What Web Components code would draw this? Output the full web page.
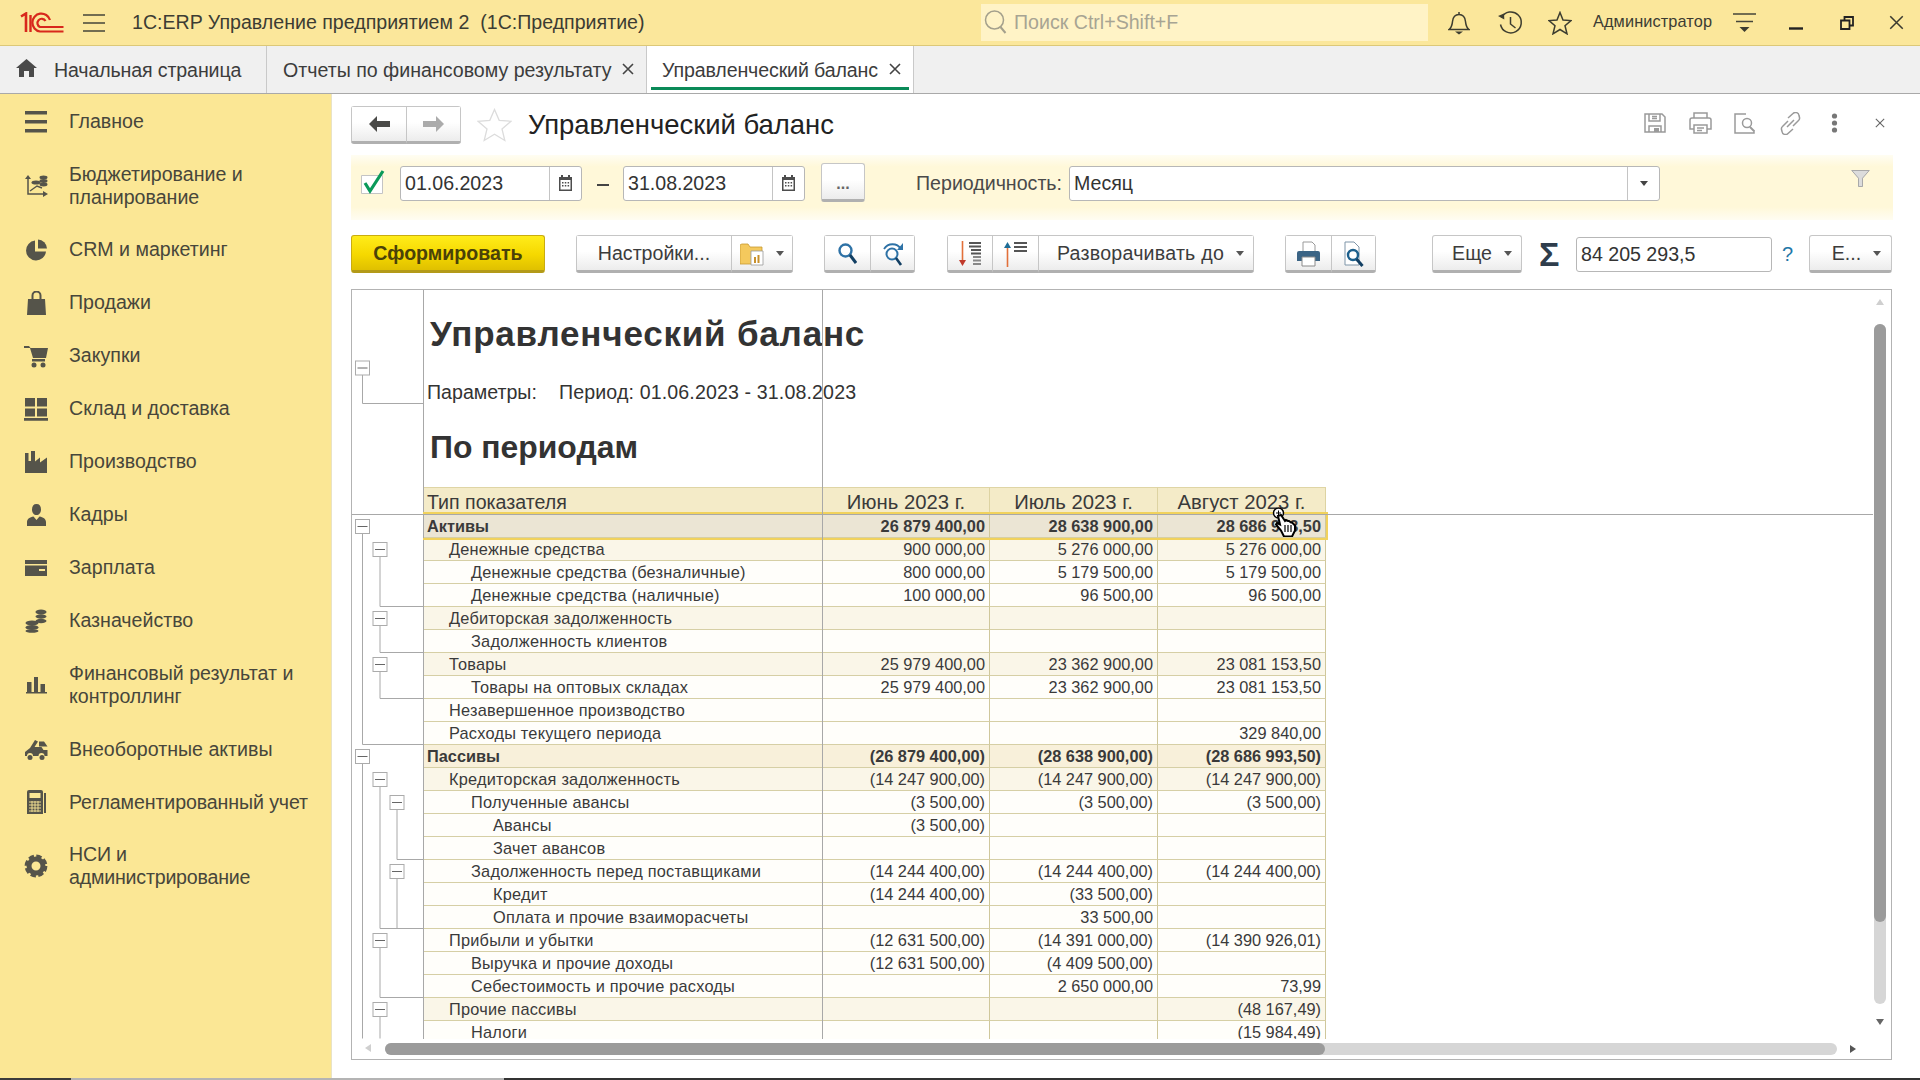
<!DOCTYPE html>
<html lang="ru"><head><meta charset="utf-8"><title>Управленческий баланс</title>
<style>
html,body{margin:0;padding:0;width:1920px;height:1080px;overflow:hidden;background:#fff;font-family:"Liberation Sans",Arial,sans-serif;color:#333}
</style></head><body>
<app-shell>
  <top-bar slot="top"></top-bar>
  <tab-bar slot="tabs">
    <ui-tab home style="width:267px;letter-spacing:-.13px">Начальная страница</ui-tab>
    <ui-tab closable style="width:380px;padding-left:16px">Отчеты по финансовому результату</ui-tab>
    <ui-tab closable active style="width:267px;letter-spacing:-.12px">Управленческий баланс</ui-tab>
  </tab-bar>
  <side-nav slot="side">
    <nav-item icon="main">Главное</nav-item>
    <nav-item icon="budget" two>Бюджетирование и<br>планирование</nav-item>
    <nav-item icon="crm">CRM и маркетинг</nav-item>
    <nav-item icon="sales">Продажи</nav-item>
    <nav-item icon="cart">Закупки</nav-item>
    <nav-item icon="stock">Склад и доставка</nav-item>
    <nav-item icon="factory">Производство</nav-item>
    <nav-item icon="person">Кадры</nav-item>
    <nav-item icon="card">Зарплата</nav-item>
    <nav-item icon="coins">Казначейство</nav-item>
    <nav-item icon="bars" two>Финансовый результат и<br>контроллинг</nav-item>
    <nav-item icon="truck">Внеоборотные активы</nav-item>
    <nav-item icon="calc" style="letter-spacing:-.11px">Регламентированный учет</nav-item>
    <nav-item icon="gear" two style="letter-spacing:-.2px">НСИ и<br>администрирование</nav-item>
  </side-nav>
  <form-page slot="main"></form-page>
</app-shell>
<script>
const svg=(w,h,vb,body,extra='')=>`<svg width="${w}" height="${h}" viewBox="${vb}" ${extra} style="display:block;flex:none">${body}</svg>`;
const NAV={
 main:'<path d="M1 1h22v3.500H1zM1 10h22v3.500H1zM1 19h22v3.500H1z"/>',
 budget:'<path d="M4 4v16h18" fill="none" stroke="#55544a" stroke-width="1.500"/><path d="M1 5l3-4 3 4zM19 17l5 3-5 3z"/><path d="M6 17l7-5 5 2" fill="none" stroke="#55544a" stroke-width="1.400"/><ellipse cx="12" cy="8.500" rx="4.500" ry="2"/><ellipse cx="19.500" cy="3.500" rx="4" ry="1.900"/><ellipse cx="19.500" cy="7" rx="4" ry="1.900"/><ellipse cx="19.500" cy="10.500" rx="4" ry="1.900"/>',
 crm:'<path d="M11 2.500a10 10 0 1 0 11 11H11z"/><path d="M14 1.500v9h9a9.500 9.500 0 0 0-9-9z"/>',
 sales:'<path d="M4 8h17l1 16H3z"/><path d="M8.500 9V4.500a4 4 0 0 1 8 0V9" fill="none" stroke="#55544a" stroke-width="2"/>',
 cart:'<path d="M0 2h5l1.500 2H24l-2 10H9L6 4H0z"/><path d="M8 15h13v2.500H8z"/><circle cx="10" cy="21" r="2.500"/><circle cx="19" cy="21" r="2.500"/>',
 stock:'<path d="M1 1h10v8.500H1zM13 1h10v8.500H13zM1 11.500h10v8H1zM13 11.500h10v8H13zM0 21h24v2.800H0z"/>',
 factory:'<path d="M1 23V3h3.500v8H7V1h4v10.500l5-4v5l7-5v15.500z"/>',
 person:'<path d="M12.500 1c3 0 4.500 2 4.500 5.500S15 12 12.500 12 8 10 8 6.500 9.500 1 12.500 1zM3 23v-4c0-3 3-5 6.500-5.500l3 3.500 3-3.500C19 14 22 16 22 19v4z"/>',
 card:'<path d="M1 4h22v4H1zM1 9.500h22V20H1z"/><path d="M15 13h6v2h-6z" fill="#fbe795"/>',
 coins:'<ellipse cx="8" cy="14" rx="6.500" ry="2.400"/><ellipse cx="8" cy="18.500" rx="6.500" ry="2.400"/><ellipse cx="8" cy="22" rx="6.500" ry="1.800"/><ellipse cx="17" cy="3" rx="5.500" ry="2.400"/><ellipse cx="17" cy="7.500" rx="5.500" ry="2.200"/><ellipse cx="17" cy="12" rx="5.500" ry="2.200"/>',
 bars:'<path d="M3 9h4.500v10H3zM10 4h4v15h-4zM16.500 11h4.500v8h-4.500zM2 19h21v1.500H2z"/>',
 truck:'<path d="M1 19v-4l5-4 5-8 3 1.500-3.500 5.500h7l2 3h4v6h-3a3 3 0 0 0-6 0H9a3 3 0 0 0-6 0z"/><circle cx="6" cy="20.500" r="2.500"/><circle cx="18" cy="20.500" r="2.500"/><path d="M15 4.500h5l3.500 5h-8.500z"/>',
 calc:'<path d="M5 0h12a2 2 0 0 1 2 2v22H3V2a2 2 0 0 1 2-2z"/><path d="M20 3h2v20h-2z"/><path d="M5.500 3h11v5h-11z" fill="#fbe795"/><path d="M5 12h12M5 15h12M5 18h12M5 21h12M8 11v11M11 11v11M14 11v11" stroke="#fbe795" stroke-width=".9" fill="none"/>',
 gear:'<circle cx="12" cy="12" r="7" fill="none" stroke="#55544a" stroke-width="5"/><circle cx="12" cy="12" r="9.800" fill="none" stroke="#55544a" stroke-width="3.200" stroke-dasharray="5.300 2.400"/>'
};
const X=(s,c='#444',w=1.5)=>svg(s,s,'0 0 12 12',`<path d="M1 1l10 10M11 1L1 11" stroke="${c}" stroke-width="${w}" fill="none"/>`);

customElements.define('app-shell',class extends HTMLElement{constructor(){super();this.attachShadow({mode:'open'}).innerHTML=`<style>
:host{display:grid;width:1920px;height:1080px;grid-template-columns:332px 1fr;grid-template-rows:46px 48px 984px 2px;overflow:hidden}
.t,.b{grid-column:1/3}.f{grid-column:1/3;display:flex}
.f i{display:block;height:2px}
</style><div class="t"><slot name="top"></slot></div><div class="b"><slot name="tabs"></slot></div><div><slot name="side"></slot></div><div><slot name="main"></slot></div>
<div class="f"><i style="width:71px;background:#3b3b3b"></i><i style="width:433px;background:#b4b4b4"></i><i style="flex:1;background:#333"></i></div>`}});

customElements.define('top-bar',class extends HTMLElement{constructor(){super();const ic='fill="none" stroke="#3d3d30" stroke-width="1.5"';this.attachShadow({mode:'open'}).innerHTML=`<style>
:host{display:flex;align-items:center;height:45px;background:#fbe79b;border-bottom:1px solid #dcc878;font-size:19.6px;color:#3c3c33;padding-left:20px;box-sizing:content-box}
.title{margin-left:27px;white-space:pre;width:849px;flex:none}
.search{width:447px;height:37px;background:#fff3c6;display:flex;align-items:center;flex:none;padding-left:3px;box-sizing:border-box;color:#a7a493;margin-top:-1px}
.search span{margin-left:7px}
.user{font-size:16.33px;letter-spacing:.1px;width:120px;flex:none;margin-left:21px;margin-top:-3px;white-space:nowrap}
</style>
${svg(44,21,'0 0 44 21','<path d="M1 4.500L6 1.500V20" stroke="#d8281c" stroke-width="2.600" fill="none"/><path d="M30 8A9 9 0 1 0 20 19.500H43.500M25.500 9A4.300 4.300 0 1 0 20 15H43.500" stroke="#d8281c" stroke-width="2.200" fill="none"/><path d="M10.500 3V20" stroke="#d8281c" stroke-width="2.400"/>')}
<span style="margin-left:19px">${svg(22,18,'0 0 22 18','<path d="M0 1h22M0 9h22M0 17h22" stroke="#45453a" stroke-width="1.400"/>')}</span>
<div class="title">1С:ERP Управление предприятием 2  (1С:Предприятие)</div>
<div class="search">${svg(23,26,'0 0 23 26','<circle cx="10.500" cy="11" r="9" fill="none" stroke="#a4a08c" stroke-width="1.500"/><path d="M16.500 18l5 6" stroke="#a4a08c" stroke-width="2"/>')}<span>Поиск Ctrl+Shift+F</span></div>
<span style="margin-left:20px">${svg(22,24,'0 0 22 24',`<path d="M1 18.500h20c-3-2-3-4-3.500-8C17 6 15 3.500 11 3.500S5 6 4.500 10.500c-.5 4-.5 6-3.500 8zM11 1v2.500" ${ic}/><path d="M7 20.500h8L11 23.500z" fill="#3d3d30"/>`)}</span>
<span style="margin-left:27px">${svg(26,26,'0 0 26 26',`<path d="M4.500 7.500a10.500 10.500 0 1 1-1 7M13.500 7v7l5 4" ${ic}/><path d="M1 6l6-2.500.3 6z" fill="#3d3d30"/>`)}</span>
<span style="margin-left:25px">${svg(24,24,'0 0 24 24',`<path d="M12 1.500l3 7.500 8 .6-6 5.200 2 8-7-4.300-7 4.300 2-8-6-5.200 8-.6z" ${ic}/>`)}</span>
<div class="user">Администратор</div>
<span style="margin-left:20px">${svg(23,20,'0 0 23 20','<path d="M0 1h23M3 8.500h17" stroke="#45453a" stroke-width="1.400"/><path d="M6.500 14h10l-5 5z" fill="#3d3d30"/>')}</span>
<span style="margin-left:33px;margin-top:12px">${svg(14,3,'0 0 14 3','<path d="M0 1.500h14" stroke="#222" stroke-width="2.400"/>')}</span>
<span style="margin-left:37px">${svg(14,14,'0 0 14 14','<path d="M1 4.500h8.500V13H1zM4.500 4.500V1H13v8.500H9.500" fill="none" stroke="#222" stroke-width="1.800"/>')}</span>
<span style="margin-left:35px">${X(15,'#3a3a30',1.2)}</span>`}});

customElements.define('tab-bar',class extends HTMLElement{constructor(){super();this.attachShadow({mode:'open'}).innerHTML=`<style>:host{display:flex;height:47px;background:#f0f0f0;border-bottom:1px solid #a9a9a9}</style><slot></slot>`}});

customElements.define('ui-tab',class extends HTMLElement{constructor(){super();
 const home=this.hasAttribute('home'),cl=this.hasAttribute('closable'),act=this.hasAttribute('active');
 this.attachShadow({mode:'open'}).innerHTML=`<style>
:host{display:flex;align-items:center;height:47px;font-size:19.6px;color:#3c3c3c;border-right:1px solid #c9c9c9;position:relative;padding-left:${home?16:15}px;white-space:nowrap;background:${act?'#fff':'transparent'};box-sizing:border-box;flex:none}
.c{margin-left:${act?11:11}px;margin-top:-1px}.h{margin-right:17px;margin-top:-4px}
.u{position:absolute;left:4px;right:4px;top:41px;height:3px;background:#0a8a58}
span{margin-top:1px}
</style>${home?`<div class="h">${svg(21,18,'0 0 21 18','<path d="M10.500 0L21 9h-3v9h-5v-6H8v6H3V9H0z" fill="#4a4a4a"/>')}</div>`:''}<span><slot></slot></span>${cl?`<div class="c">${X(12,'#444',1.6)}</div>`:''}${act?'<div class="u"></div>':''}`}});

customElements.define('side-nav',class extends HTMLElement{constructor(){super();this.attachShadow({mode:'open'}).innerHTML=`<style>:host{display:block;width:331px;height:983px;padding-top:1px;background:#fbe795;border-right:1px solid #e9e3c6;font-size:19.6px;color:#47463b;box-sizing:content-box}</style><slot></slot>`}});
customElements.define('nav-item',class extends HTMLElement{constructor(){super();this.attachShadow({mode:'open'}).innerHTML=`<style>
:host{display:flex;align-items:center;padding:15px 0 15px 24px;line-height:23px}
:host([two]){padding:14.7px 0 14.700px 24px}
.i{width:24px;height:22px;flex:none;margin-right:21px;display:flex;align-items:center}
</style><div class="i">${svg(24,24,'0 0 24 24',`<g fill="#55544a">${NAV[this.getAttribute('icon')]||''}</g>`)}</div><div><slot></slot></div>`}});

customElements.define('ui-btn',class extends HTMLElement{constructor(){super();const a=this.hasAttribute('arrow');this.attachShadow({mode:'open'}).innerHTML=`<style>
:host{display:flex;align-items:center;justify-content:center;box-sizing:border-box;height:38px;background:linear-gradient(#fff 45%,#ececec);border:1px solid #c6c6c6;border-bottom:3px solid #b0b0b0;border-radius:3px;font-size:19.6px;color:#3c3c3c;white-space:nowrap;flex:none;letter-spacing:var(--ls,0)}
:host([primary]){background:linear-gradient(#ffec1a,#f5d800 55%,#dfc000);border-color:#c9ac10;border-bottom-color:#b39a18;font-weight:bold;color:#4a4208}
.s{padding-top:1px}
.a{width:0;height:0;border:4px solid transparent;border-top:5px solid #555;border-bottom:0;margin-left:12px;flex:none}
</style><div class="s"><slot></slot></div>${a?'<div class="a"></div>':''}`}});
customElements.define('btn-group',class extends HTMLElement{constructor(){super();this.attachShadow({mode:'open'}).innerHTML=`<style>:host{display:flex;flex:none;border-radius:3px;overflow:hidden}::slotted(ui-btn){border-radius:0;border-left-width:0}::slotted(ui-btn:first-child){border-left-width:1px}</style><slot></slot>`}});
customElements.define('ui-field',class extends HTMLElement{constructor(){super();const b=this.getAttribute('btn');const ic=b==='cal'?svg(13,16,'0 0 13 16','<path d="M0 2h13v14H0z" fill="#4d4d4d"/><path d="M1.500 5h10v9.500h-10z" fill="#fff"/><path d="M3 0v3M10 0v3" stroke="#4d4d4d" stroke-width="2"/><path d="M3 7h1.500v1.500H3zM5.800 7h1.500v1.500H5.800zM8.600 7h1.500v1.500H8.600zM3 10h1.500v1.500H3zM5.800 10h1.500v1.500H5.800zM8.600 10h1.500v1.500H8.600z" fill="#4d4d4d"/>'):b==='down'?'<div style="width:0;height:0;border:4px solid transparent;border-top:5px solid #444;border-bottom:0"></div>':'';
 this.attachShadow({mode:'open'}).innerHTML=`<style>
:host{display:flex;align-items:center;box-sizing:border-box;height:35px;background:#fff;border:1px solid #b7b7b7;border-radius:3px;font-size:19.6px;color:#333;flex:none}
.v{flex:1;padding:1px 0 0 4px;white-space:nowrap}.b{width:31px;height:100%;border-left:1px solid #c4c4c4;display:flex;align-items:center;justify-content:center;flex:none}
</style><div class="v"><slot></slot></div>${b?`<div class="b">${ic}</div>`:''}`}});

customElements.define('form-page',class extends HTMLElement{constructor(){super();
 const g='#9a9a9a';
 this.attachShadow({mode:'open'}).innerHTML=`<style>
:host{display:block;padding:0 27px 0 19px;height:984px;background:#fff;box-sizing:border-box}
.head{display:flex;align-items:center;height:61px}
.head>span.u,.head>svg{margin-top:-3px}
h1{font:normal 27.45px "Liberation Sans",Arial,sans-serif;color:#222;margin:0 0 0 16px;padding-top:1px;flex:1;white-space:nowrap}
.filter{display:flex;align-items:center;height:65px;box-sizing:border-box;padding-bottom:9px;background:linear-gradient(#fffdf2,#fff8d9 18%,#fff8d9 80%,#fffdf2)}
.lab{font-size:19.6px;color:#4a4a4a;white-space:nowrap;padding-top:1px}
.tools{display:flex;align-items:center;height:38px;margin-top:15px}
.sigma{font:bold 34px "Liberation Sans",Arial,sans-serif;color:#2f3d4c;flex:none;width:19px;margin-left:17px;line-height:38px}
.q{font-size:20px;color:#1f77a8;margin-left:10px;width:11px;flex:none}
report-view{margin-top:16px}
</style>
<div class="head">
 <btn-group>
  <ui-btn style="width:56px">${svg(21,16,'0 0 21 16','<path d="M8 0v5h13v6H8v5L0 8z" fill="#4a4a48"/>')}</ui-btn>
  <ui-btn style="width:54px">${svg(21,16,'0 0 21 16','<path d="M13 0v5H0v6h13v5l8-8z" fill="#ababab"/>')}</ui-btn>
 </btn-group>
 <span style="margin-left:16px">${svg(35,34,'0 0 35 34','<path d="M17.500 1.500l4.700 10.800 11.800 1-9 7.700 2.800 11.500-10.300-6.200-10.300 6.200 2.800-11.500-9-7.700 11.800-1z" fill="#fff" stroke="#dcdcdc" stroke-width="1.300"/>')}</span>
 <h1>Управленческий баланс</h1>
 ${svg(22,20,'0 0 22 20',`<path d="M1 1h17l3 3v15H1zM5 1v7h11V1M8 3.500h5M8 5.500h5M5 19v-6h12v6" fill="none" stroke="${g}" stroke-width="1.500"/><path d="M10 15h5v4h-5z" fill="${g}"/>`)}
 <span class="u" style="margin-left:23px">${svg(23,22,'0 0 23 22',`<path d="M5 6V1h13v5M5 17H1V8a2 2 0 0 1 2-2h17a2 2 0 0 1 2 2v9h-4M5 13h13v8H5zM8 16h7M8 18.500h5" fill="none" stroke="${g}" stroke-width="1.500"/>`)}</span>
 <span class="u" style="margin-left:22px">${svg(21,21,'0 0 21 21',`<path d="M12 1H1v19h19v-3" fill="none" stroke="${g}" stroke-width="1.500"/><circle cx="13" cy="10" r="4.500" fill="none" stroke="${g}" stroke-width="1.500"/><path d="M16 14l4 4" stroke="${g}" stroke-width="2"/>`)}</span>
 <span class="u" style="margin-left:24px">${svg(23,23,'0 0 23 23',`<path d="M9 6l5-4.500a3.500 3.500 0 0 1 6 2l.5 2a3 3 0 0 1-1 3L14 14M14 17l-5 4.500a3.500 3.500 0 0 1-6-2l-.5-2a3 3 0 0 1 1-3L9 9M8 15l7-7" fill="none" stroke="${g}" stroke-width="1.500"/>`)}</span>
 <span class="u" style="margin-left:29px">${svg(7,20,'0 0 7 20','<circle cx="3.500" cy="3" r="2.600" fill="#777"/><circle cx="3.500" cy="10" r="2.600" fill="#777"/><circle cx="3.500" cy="17" r="2.600" fill="#777"/>')}</span>
 <span class="u" style="margin-left:37px;margin-right:8px">${X(10,'#666',1.3)}</span>
</div>
<div class="filter">
 <span style="margin-left:10px;margin-top:-2px;width:24px;flex:none">${svg(24,24,'0 0 24 24','<path d="M.5 5.500h21v18H.5z" fill="#fff" stroke="#c4c4c4"/><path d="M4 13l5 8L22 1" fill="none" stroke="#0a9a5a" stroke-width="3.200"/>')}</span>
 <ui-field btn="cal" style="width:182px;margin-left:15px">01.06.2023</ui-field>
 <span style="width:12px;height:2px;background:#444;margin:3px 14px 0 15px;flex:none"></span>
 <ui-field btn="cal" style="width:182px">31.08.2023</ui-field>
 <ui-btn style="width:44px;margin-left:16px;height:39px;margin-top:-2px;font-size:16px;padding-top:4px;font-weight:bold;color:#666">...</ui-btn>
 <span class="lab" style="margin-left:51px;margin-right:7px;flex:none">Периодичность:</span>
 <ui-field btn="down" style="width:591px">Месяц</ui-field>
 <span style="margin-left:191px;margin-top:-9px">${svg(19,17,'0 0 19 17','<path d="M0 0h19l-7 8v9H7V8z" fill="#dcdcdc"/><path d="M.8.500h17.400l-6.700 7.700V16.500h-4V8.200z" fill="none" stroke="#a9a9a9"/>')}</span>
</div>
<div class="tools">
 <ui-btn primary style="width:194px">Сформировать</ui-btn>
 <btn-group style="margin-left:31px">
  <ui-btn style="width:156px">Настройки...</ui-btn>
  <ui-btn arrow style="width:61px">${svg(24,24,'0 0 24 24','<path d="M0 4a2 2 0 0 1 2-2h6l2 3h12v17H0z" fill="#f4c95d" stroke="#c89a30" stroke-width=".8"/><path d="M11 9h12v14H11z" fill="#fff" stroke="#9a9a9a" stroke-width=".8"/><path d="M14 15h2v6h-2zM17.500 13h2v8h-2z" fill="#c8902c"/>')}</ui-btn>
 </btn-group>
 <btn-group style="margin-left:31px">
  <ui-btn style="width:47px">${svg(19,21,'0 0 19 21','<circle cx="7.500" cy="7.500" r="6" fill="none" stroke="#2e72a6" stroke-width="2.400"/><path d="M12 12l6 8" stroke="#123f63" stroke-width="3"/>')}</ui-btn>
  <ui-btn style="width:44px">${svg(22,24,'0 0 22 24','<circle cx="10" cy="12" r="5.500" fill="none" stroke="#2e72a6" stroke-width="2"/><path d="M14 16l5 7" stroke="#123f63" stroke-width="2.600"/><path d="M2 7a10 10 0 0 1 17 0" fill="none" stroke="#2e72a6" stroke-width="1.800"/><path d="M21 1v7h-6z" fill="#2e72a6"/>')}</ui-btn>
 </btn-group>
 <btn-group style="margin-left:32px">
  <ui-btn style="width:46px">${svg(23,26,'0 0 23 26','<path d="M3.500 0v21" stroke="#e2703a" stroke-width="1.600"/><path d="M0 19h7l-3.500 6z" fill="#c0392b"/><path d="M10 2h12M10 5.500h12M12 9h10M12 12.500h10" stroke="#555" stroke-width="1.800"/><path d="M14 16h8M14 19.500h8M14 23h8" stroke="#888" stroke-width="1.800"/>')}</ui-btn>
  <ui-btn style="width:46px">${svg(23,26,'0 0 23 26','<path d="M3.500 5v21" stroke="#e2703a" stroke-width="1.600"/><path d="M0 7h7L3.500 1z" fill="#1f6d96"/><path d="M10 2h13M10 6h13M10 10h13" stroke="#555" stroke-width="1.800"/>')}</ui-btn>
  <ui-btn arrow style="width:215px;--ls:.24px;padding-left:9px">Разворачивать до</ui-btn>
 </btn-group>
 <btn-group style="margin-left:31px">
  <ui-btn style="width:47px">${svg(23,26,'0 0 23 26','<path d="M6 1h9l3 3v8H6z" fill="#fff" stroke="#9a9a9a"/><path d="M2 10h19a2 2 0 0 1 2 2v8H0v-8a2 2 0 0 1 2-2z" fill="#3b6485"/><path d="M5 16h13v9H5z" fill="#fff" stroke="#8a8a8a"/>')}</ui-btn>
  <ui-btn style="width:44px">${svg(21,26,'0 0 21 26','<path d="M2 1h9l5 5v18H2z" fill="#fff" stroke="#7f95a8"/><circle cx="10" cy="14" r="5" fill="#fff" stroke="#1c5f8c" stroke-width="2.400"/><path d="M13.500 18l6 7" stroke="#123f63" stroke-width="3"/>')}</ui-btn>
 </btn-group>
 <ui-btn arrow style="width:90px;margin-left:56px;padding-left:10px">Еще</ui-btn>
 <span class="sigma">Σ</span>
 <ui-field style="width:196px;margin-left:18px">84 205 293,5</ui-field>
 <span class="q">?</span>
 <ui-btn arrow style="width:83px;margin-left:16px;padding-left:12px">Е...</ui-btn>
</div>
<report-view></report-view>`}});

const ROWS=[
['Активы',0,'sel','26 879 400,00','28 638 900,00','28 686 993,50',1],
['Денежные средства',1,'g','900 000,00','5 276 000,00','5 276 000,00'],
['Денежные средства (безналичные)',2,'','800 000,00','5 179 500,00','5 179 500,00'],
['Денежные средства (наличные)',2,'','100 000,00','96 500,00','96 500,00'],
['Дебиторская задолженность',1,'g','','',''],
['Задолженность клиентов',2,'','','',''],
['Товары',1,'g','25 979 400,00','23 362 900,00','23 081 153,50'],
['Товары на оптовых складах',2,'','25 979 400,00','23 362 900,00','23 081 153,50'],
['Незавершенное производство',1,'','','',''],
['Расходы текущего периода',1,'','','','329 840,00'],
['Пассивы',0,'top','(26 879 400,00)','(28 638 900,00)','(28 686 993,50)',1],
['Кредиторская задолженность',1,'g','(14 247 900,00)','(14 247 900,00)','(14 247 900,00)'],
['Полученные авансы',2,'','(3 500,00)','(3 500,00)','(3 500,00)'],
['Авансы',3,'','(3 500,00)','',''],
['Зачет авансов',3,'','','',''],
['Задолженность перед поставщиками',2,'','(14 244 400,00)','(14 244 400,00)','(14 244 400,00)'],
['Кредит',3,'','(14 244 400,00)','(33 500,00)',''],
['Оплата и прочие взаиморасчеты',3,'','','33 500,00',''],
['Прибыли и убытки',1,'','(12 631 500,00)','(14 391 000,00)','(14 390 926,01)'],
['Выручка и прочие доходы',2,'','(12 631 500,00)','(4 409 500,00)',''],
['Себестоимость и прочие расходы',2,'','','2 650 000,00','73,99'],
['Прочие пассивы',1,'g','','','(48 167,49)'],
['Налоги',2,'','','','(15 984,49)']];

customElements.define('tree-gutter',class extends HTMLElement{constructor(){super();
 const Y0=290,X0=352,R=71;let p='',b='';
 const L=[362.5,380,397];
 const seg=[[0,368,404,1],[0,526.5,745,1],[0,756.5,1039,0],[1,549.5,607,1],[1,618.5,653,1],[1,664.5,699,1],[1,779.5,929,1],[1,940.5,998,1],[1,1009.5,1039,0],[2,802.5,860,1],[2,871.5,929,1]];
 for(const [l,c,e,h] of seg){const x=L[l]-X0,y=c-Y0,ey=e-Y0;
  p+=`M${x} ${y}V${ey-.5}`;if(h)p+=`H${R}`;
  b+=`<rect x="${x-7}" y="${y-7}" width="14" height="14" fill="#fff" stroke="#ababab"/><path d="M${x-5} ${y}h10" stroke="#666"/>`;}
 this.attachShadow({mode:'open'}).innerHTML=`<style>:host{display:block;width:71px;flex:none;border-right:1px solid #a8a8a8;height:749px}</style>${svg(71,749,'0 0 71 749',`<path d="${p}" fill="none" stroke="#a8a8a8"/>${b}`)}`}});

customElements.define('report-table',class extends HTMLElement{constructor(){super();
 const cell=(t,c)=>`<div class="${c}">${t}</div>`;
 let h=cell('Тип показателя','hc l')+['Июнь 2023 г.','Июль 2023 г.','Август 2023 г.'].map(t=>cell(t,'hc m')).join('');
 let b='';
 for(const r of ROWS){const [n,lv,k,a,c,d,bold]=r;const cls=`c ${k} ${bold?'bd':''}`;
  b+=`<div class="${cls} t" style="padding-left:${3+lv*22}px">${n}</div>`+[a,c,d].map(v=>cell(v,cls+' n')).join('');}
 this.attachShadow({mode:'open'}).innerHTML=`<style>
:host{display:grid;grid-template-columns:399px 167px 168px 168px;width:902px;position:relative;font-size:16.33px;color:#3a3a3a}
.hc{height:28px;box-sizing:border-box;background:#f4ebc8;border-top:1px solid #dfd5a5;font-size:19.6px;line-height:28px;border-right:1px solid #ddd3a2;white-space:nowrap}
.l{padding-left:3px}.m{text-align:center;font-size:20.3px}
.c{box-sizing:border-box;height:23px;line-height:22px;background:#fffefa;border-bottom:1px solid #d6cfa5;border-right:1px solid #cfc79b;white-space:nowrap}
.t{letter-spacing:.22px}
.n{text-align:right;padding-right:4px}
.g{background:#faf6e8}.top{background:#f8f0da}.sel{background:#ebe5d4}.bd{font-weight:bold;letter-spacing:0}
.o{position:absolute;left:-1px;top:24.500px;width:905px;height:28.500px;box-sizing:border-box;border:2.500px solid #f1d25c;border-left:none;pointer-events:none}
</style>${h}${b}<div class="o"></div>`;
}});

customElements.define('report-view',class extends HTMLElement{constructor(){super();
 this.attachShadow({mode:'open'}).innerHTML=`<style>
:host{display:block;box-sizing:border-box;width:1541px;height:771px;border:1px solid #b3b3b3;position:relative;background:#fff}
.vp{height:749px;overflow:hidden;display:flex;position:relative}
.sheet{flex:none;width:1400px;color:#333}
.h1{font:bold 35px/40px "Liberation Sans",Arial,sans-serif;letter-spacing:.8px;margin:24px 0 0 6px;white-space:nowrap}
.p{font-size:19.6px;line-height:24px;margin:26px 0 0 3px;display:flex;white-space:nowrap}.p span:first-child{width:132px}.p span+span{letter-spacing:.13px}
.h2{font:bold 31.900px/38px "Liberation Sans",Arial,sans-serif;margin:24px 0 21px 6px;white-space:nowrap}
.fv{position:absolute;left:470px;top:0;width:1px;height:749px;background:#a8a8a8}
.fh{position:absolute;left:0;top:224px;width:1521px;height:1px;background:#a8a8a8}
.bar{position:absolute;border-radius:7px}
.tri{position:absolute;width:0;height:0;border:5px solid transparent}
.hand{position:absolute;left:920px;top:217px}
</style>
<div class="vp">
 <tree-gutter></tree-gutter>
 <div class="sheet">
  <div class="h1">Управленческий баланс</div>
  <div class="p"><span>Параметры:</span><span>Период: 01.06.2023 - 31.08.2023</span></div>
  <div class="h2">По периодам</div>
  <report-table></report-table>
 </div>
 <div class="fh"></div><div class="fv"></div>
 <div class="hand">${svg(26,30,'0 0 26 30','<circle cx="6.500" cy="6" r="5" fill="#fff" stroke="#000" stroke-width="1.500"/><path d="M4 6h5M6.500 3.500v5" stroke="#000"/><path d="M6 9l3-1 4 6 1-1 2 1 1 0 2 1.500 1 0 3 3v5l-3 6H12l-3-6-5-6 1-1.500 3 1.500z" fill="#fff" stroke="#000" stroke-width="2"/><path d="M13 18v7M16 18v7M19 18v7" stroke="#000" stroke-width="1.200"/>')}</div>
</div>
<div class="tri" style="left:1524px;top:9px;border-width:0 4px 6px;border-bottom-color:#cfcfcf"></div>
<div class="bar" style="left:1522px;top:34px;width:12px;height:680px;background:#d6d6d6"></div>
<div class="bar" style="left:1522px;top:34px;width:12px;height:598px;background:#9b9b9b"></div>
<div class="tri" style="left:1524px;top:729px;border-width:6px 4px 0;border-top-color:#666"></div>
<div class="tri" style="left:13px;top:754px;border-width:4px 6px 4px 0;border-right-color:#cfcfcf"></div>
<div class="bar" style="left:33px;top:753px;width:1452px;height:12px;background:#d6d6d6"></div>
<div class="bar" style="left:33px;top:753px;width:940px;height:12px;background:#9b9b9b"></div>
<div class="tri" style="left:1498px;top:755px;border-width:4px 0 4px 6px;border-left-color:#555"></div>`}});
</script>
</body></html>
